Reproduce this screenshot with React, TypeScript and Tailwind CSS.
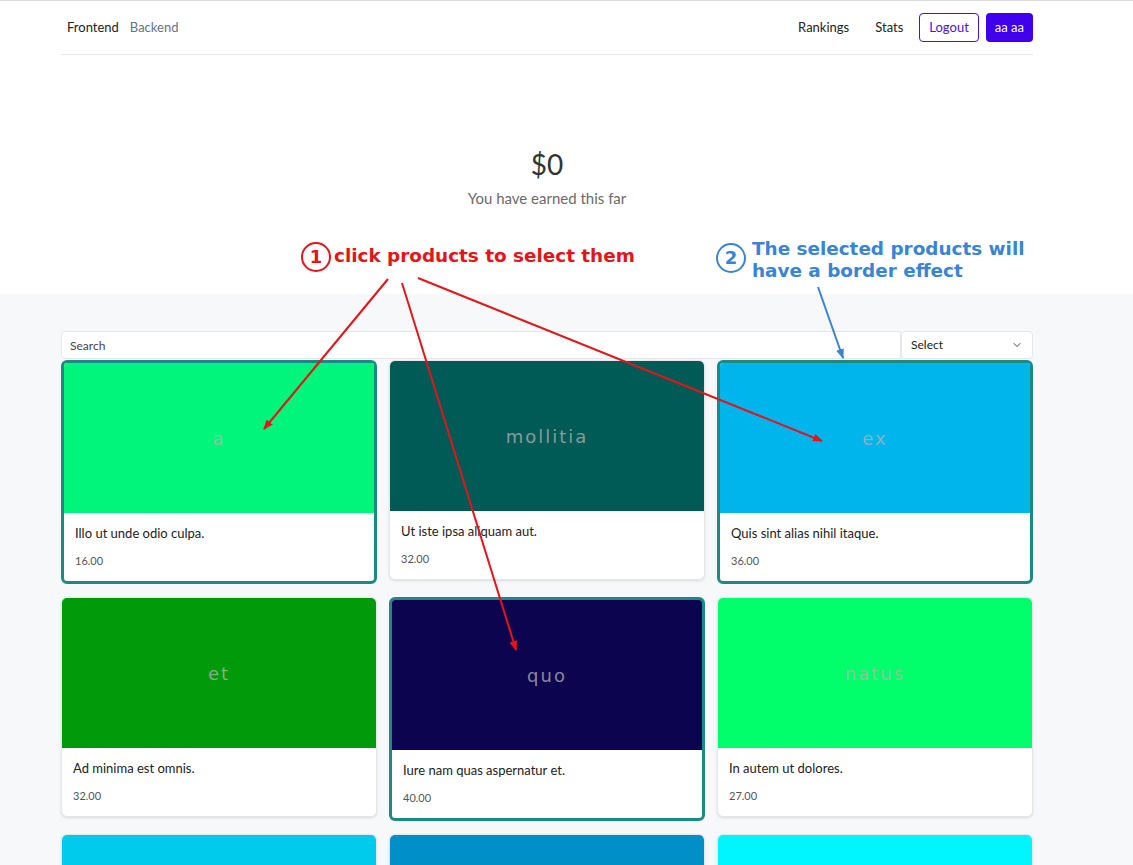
import { ChevronDown } from 'lucide-react';

type Product = {
  tag: string;
  title: string;
  price: string;
  bg: string;
  selected?: boolean;
};

const products: Product[] = [
  { tag: 'a', title: 'Illo ut unde odio culpa.', price: '16.00', bg: 'bg-[#00f57a]', selected: true },
  { tag: 'mollitia', title: 'Ut iste ipsa aliquam aut.', price: '32.00', bg: 'bg-[#005a56]' },
  { tag: 'ex', title: 'Quis sint alias nihil itaque.', price: '36.00', bg: 'bg-[#00b4ec]', selected: true },
  { tag: 'et', title: 'Ad minima est omnis.', price: '32.00', bg: 'bg-[#009a0a]' },
  { tag: 'quo', title: 'Iure nam quas aspernatur et.', price: '40.00', bg: 'bg-[#0d0450]', selected: true },
  { tag: 'natus', title: 'In autem ut dolores.', price: '27.00', bg: 'bg-[#00ff6a]' },
  { tag: 'qui', title: 'Sed quia aut voluptas.', price: '21.00', bg: 'bg-[#00cbec]' },
  { tag: 'non', title: 'Nobis est at rerum.', price: '18.00', bg: 'bg-[#0090c8]' },
  { tag: 'sit', title: 'Eum et autem ducimus.', price: '45.00', bg: 'bg-[#00f6ff]' },
];

function ProductCard({ p }: { p: Product }) {
  return (
    <div
      className={
        p.selected
          ? 'bg-white rounded-md overflow-hidden border-[3px] border-[#1a8a85]'
          : 'bg-white rounded-md overflow-hidden border border-gray-200 shadow'
      }
    >
      <div className={`h-[150px] flex items-center justify-center ${p.bg}`}>
        <span className="font-['DejaVu_Sans',sans-serif] text-[18px] tracking-[2px] text-[#b4b4b4]/75">{p.tag}</span>
      </div>
      <div className="px-[11px] pt-[10px] pb-[12px]">
        <p className="text-[13px] leading-5 text-[#222]">{p.title}</p>
        <p className="mt-[10px] text-[11px] leading-4 text-[#555]">{p.price}</p>
      </div>
    </div>
  );
}

function Annotations() {
  return (
    <div className="absolute inset-0 pointer-events-none font-['DejaVu_Sans',sans-serif] font-bold">
      <svg className="absolute top-0 left-0" width="1133" height="865">
        <defs>
          <marker id="red" markerWidth="10" markerHeight="8" refX="9" refY="4" orient="auto" markerUnits="userSpaceOnUse">
            <path d="M0,0 L10,4 L0,8 z" fill="#e41418" />
          </marker>
          <marker id="blue" markerWidth="10" markerHeight="8" refX="9" refY="4" orient="auto" markerUnits="userSpaceOnUse">
            <path d="M0,0 L10,4 L0,8 z" fill="#3a84d6" />
          </marker>
        </defs>
        <circle cx="316" cy="257" r="14" fill="white" stroke="#e41418" strokeWidth="2" />
        <circle cx="731" cy="258" r="14" fill="white" stroke="#3a84d6" strokeWidth="2" />
        <line x1="388" y1="279" x2="264" y2="429" stroke="#e41418" strokeWidth="2" markerEnd="url(#red)" />
        <line x1="402" y1="283" x2="516" y2="650" stroke="#e41418" strokeWidth="2" markerEnd="url(#red)" />
        <line x1="418" y1="278" x2="822" y2="441" stroke="#e41418" strokeWidth="2" markerEnd="url(#red)" />
        <line x1="818" y1="287" x2="843" y2="358" stroke="#3a84d6" strokeWidth="2" markerEnd="url(#blue)" />
      </svg>
      <span className="absolute left-[302px] top-[243px] w-[28px] text-center text-[18px] leading-7 text-[#e41418]">1</span>
      <span className="absolute left-[334px] top-[245px] text-[18.4px] leading-[22px] text-[#e41418] whitespace-nowrap">
        click products to select them
      </span>
      <span className="absolute left-[717px] top-[244px] w-[28px] text-center text-[18px] leading-7 text-[#3a84d6]">2</span>
      <span className="absolute left-[752px] top-[238px] text-[18.4px] leading-[22px] text-[#3a84d6] whitespace-nowrap">
        The selected products will
        <br />
        have a border effect
      </span>
    </div>
  );
}

export default function App() {
  return (
    <div className="relative min-h-screen bg-[#f7f8fa] font-['Lato',sans-serif] text-[#222] overflow-hidden">
      <div className="bg-white border-t border-[#dcdcdc]">
        <nav className="ml-[61px] w-[972px] h-[54px] flex items-center justify-between border-b border-gray-200">
          <div className="flex items-center gap-[11px] pl-[6px] text-[13px]">
            <a className="text-[#222]">Frontend</a>
            <a className="text-[#6b7280]">Backend</a>
          </div>
          <div className="flex items-center text-[13px]">
            <a className="text-[#222]">Rankings</a>
            <a className="ml-[26px] text-[#222]">Stats</a>
            <button className="ml-[16px] h-[29px] px-[9px] rounded-[4px] border border-[#4c10d4] text-[#4c10d4]">Logout</button>
            <button className="ml-[7px] h-[29px] px-[9px] rounded-[4px] bg-[#4000ee] text-white">aa aa</button>
          </div>
        </nav>
        <section className="h-[239px] flex flex-col items-center pt-[91px] ml-[61px] w-[972px]">
          <h1 className="text-[28px] leading-9 text-[#333]">$0</h1>
          <p className="mt-[6px] text-[15px] leading-5 text-[#6b6b6b]">You have earned this far</p>
        </section>
      </div>

      <main className="ml-[61px] w-[972px] pt-[37px] pb-10">
        <div className="flex h-[28px]">
          <input
            placeholder="Search"
            className="flex-1 h-full px-[8px] text-[12px] bg-white border border-gray-200 rounded-l-[4px] placeholder:text-[#444] outline-none"
          />
          <div className="w-[132px] h-full px-[9px] flex items-center justify-between bg-white border border-gray-200 rounded-[4px] text-[12px] text-[#222]">
            <span>Select</span>
            <ChevronDown className="w-3 h-3 text-[#444]" strokeWidth={2} />
          </div>
        </div>
        <div className="mt-[1px] grid grid-cols-3 gap-x-[12px] gap-y-[13px] items-start">
          {products.map((p) => (
            <ProductCard key={p.tag} p={p} />
          ))}
        </div>
      </main>

      <Annotations />
    </div>
  );
}
